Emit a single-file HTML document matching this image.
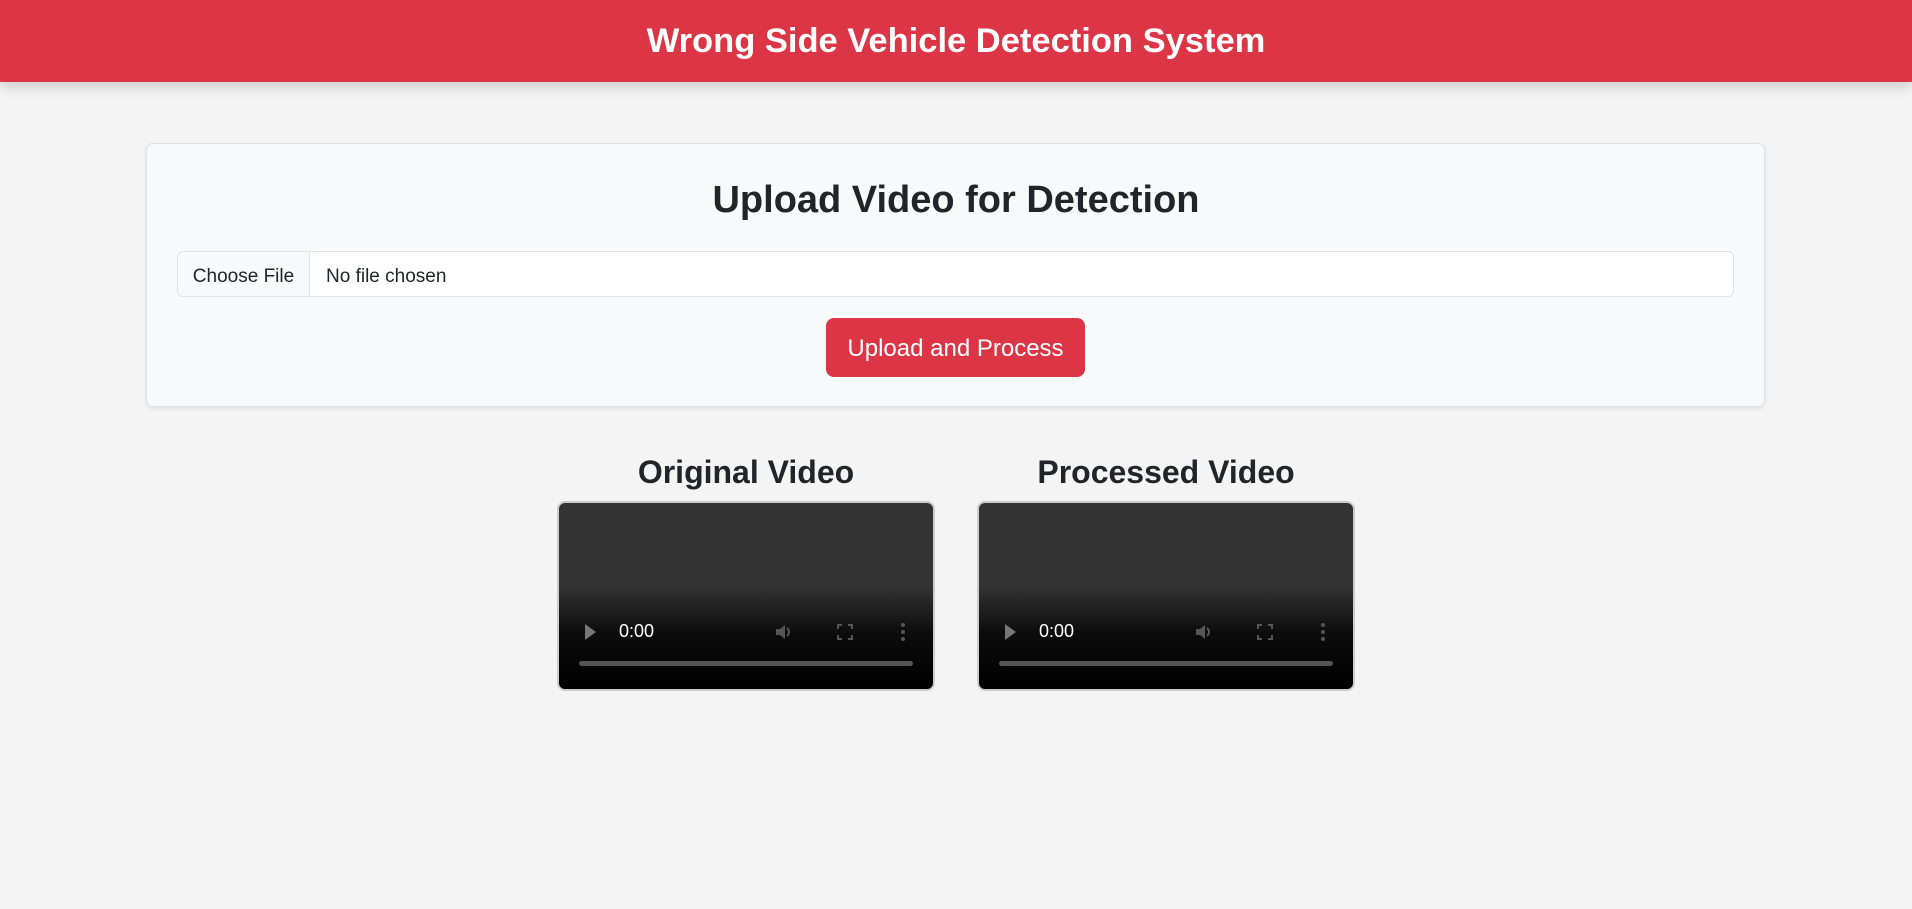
<!DOCTYPE html>
<html><head><meta charset="utf-8"><style>
*{box-sizing:border-box;margin:0;padding:0}
body{width:1912px;height:909px;background:#f4f4f4;font-family:"Liberation Sans",sans-serif;color:#212529;position:relative;overflow:hidden}
.hdr{position:absolute;left:0;top:0;width:1912px;height:82px;background:#dc3545;box-shadow:0 4px 14px rgba(0,0,0,.18);color:#fff;font-weight:bold;font-size:34.5px;text-align:center;line-height:82px}
.card{position:absolute;left:146px;top:143px;width:1619px;height:264px;background:#f8f9fa;border:1px solid #dee2e6;border-radius:7px;box-shadow:0 2px 4px rgba(0,0,0,.08)}
.h2{position:absolute;left:0;width:1912px;text-align:center;font-size:38px;font-weight:bold;top:176px;line-height:48px}
.file{position:absolute;left:177px;top:251px;width:1557px;height:46px;background:#fff;border:1px solid #dee2e6;border-radius:6px;font-size:19px;line-height:50px}
.file .b{position:absolute;left:0;top:0;width:132px;height:44px;background:#f8f9fa;border-right:1px solid #dee2e6;text-align:center;border-radius:6px 0 0 6px}
.file .t{position:absolute;left:148px;top:0}
.btn{position:absolute;left:826px;top:318px;width:259px;height:59px;background:#dc3545;color:#fff;border-radius:8px;font-size:24px;text-align:center;line-height:62px}
.vh{position:absolute;top:450px;font-size:32px;font-weight:bold;text-align:center;width:378px;line-height:44px}
.vid{position:absolute;top:501px;width:378px;height:190px;border:2px solid #ccc;border-radius:8px;background:linear-gradient(#333 0,#333 45%,#0c0c0c 70%,#000 100%);overflow:hidden}
.vid .p{position:absolute;left:26px;top:121px;width:0;height:0;border-left:11px solid #777;border-top:8px solid transparent;border-bottom:8px solid transparent}
.vid .tm{position:absolute;left:60px;top:118px;color:#fff;font-size:18px}
.vid .bar{position:absolute;left:20px;top:158px;width:334px;height:5px;background:#555;border-radius:3px}
.vid svg{position:absolute;top:118px}
</style></head><body>
<div class="hdr">Wrong Side Vehicle Detection System</div>
<div class="card"></div>
<div class="h2">Upload Video for Detection</div>
<div class="file"><div class="b">Choose File</div><div class="t">No file chosen</div></div>
<div class="btn">Upload and Process</div>
<div class="vh" style="left:557px">Original Video</div>
<div class="vh" style="left:977px">Processed Video</div>
<div class="vid" style="left:557px"><div class="p"></div><div class="tm">0:00</div>
<svg style="left:214px" width="22" height="22" viewBox="0 0 22 22"><path d="M3 8h4l5-4v14l-5-4H3z" fill="#555"/><path d="M14 7a5 5 0 0 1 0 8" stroke="#555" stroke-width="2" fill="none"/></svg>
<svg style="left:275px" width="22" height="22" viewBox="0 0 22 22"><path d="M4 8V4h4M14 4h4v4M18 14v4h-4M8 18H4v-4" stroke="#555" stroke-width="2" fill="none"/></svg>
<svg style="left:340px" width="8" height="22" viewBox="0 0 8 22"><circle cx="4" cy="4" r="2" fill="#555"/><circle cx="4" cy="11" r="2" fill="#555"/><circle cx="4" cy="18" r="2" fill="#555"/></svg>
<div class="bar"></div></div>
<div class="vid" style="left:977px"><div class="p"></div><div class="tm">0:00</div>
<svg style="left:214px" width="22" height="22" viewBox="0 0 22 22"><path d="M3 8h4l5-4v14l-5-4H3z" fill="#555"/><path d="M14 7a5 5 0 0 1 0 8" stroke="#555" stroke-width="2" fill="none"/></svg>
<svg style="left:275px" width="22" height="22" viewBox="0 0 22 22"><path d="M4 8V4h4M14 4h4v4M18 14v4h-4M8 18H4v-4" stroke="#555" stroke-width="2" fill="none"/></svg>
<svg style="left:340px" width="8" height="22" viewBox="0 0 8 22"><circle cx="4" cy="4" r="2" fill="#555"/><circle cx="4" cy="11" r="2" fill="#555"/><circle cx="4" cy="18" r="2" fill="#555"/></svg>
<div class="bar"></div></div>
</body></html>
